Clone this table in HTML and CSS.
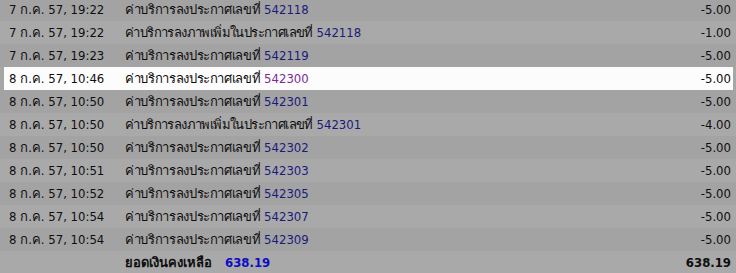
FILE: index.html
```html
<!DOCTYPE html>
<html lang="th">
<head>
<meta charset="utf-8">
<link rel="stylesheet" href="styles.css">
</head>
<body>
<div class="list">
  <div class="row odd"><div class="cells"><span class="date">7 ก.ค. 57, 19:22</span><span class="desc"><span class="th">ค่าบริการลงประกาศเลขที่</span> <a class="lnk">542118</a></span><span class="amt">-5.00</span></div></div>
  <div class="row even"><div class="cells"><span class="date">7 ก.ค. 57, 19:22</span><span class="desc"><span class="th long">ค่าบริการลงภาพเพิ่มในประกาศเลขที่</span> <a class="lnk">542118</a></span><span class="amt">-1.00</span></div></div>
  <div class="row odd"><div class="cells"><span class="date">7 ก.ค. 57, 19:23</span><span class="desc"><span class="th">ค่าบริการลงประกาศเลขที่</span> <a class="lnk">542119</a></span><span class="amt">-5.00</span></div></div>
  <div class="row hl"><div class="cells"><span class="date">8 ก.ค. 57, 10:46</span><span class="desc"><span class="th">ค่าบริการลงประกาศเลขที่</span> <a class="lnk visited">542300</a></span><span class="amt">-5.00</span></div></div>
  <div class="row odd"><div class="cells"><span class="date">8 ก.ค. 57, 10:50</span><span class="desc"><span class="th">ค่าบริการลงประกาศเลขที่</span> <a class="lnk">542301</a></span><span class="amt">-5.00</span></div></div>
  <div class="row even"><div class="cells"><span class="date">8 ก.ค. 57, 10:50</span><span class="desc"><span class="th long">ค่าบริการลงภาพเพิ่มในประกาศเลขที่</span> <a class="lnk">542301</a></span><span class="amt">-4.00</span></div></div>
  <div class="row odd"><div class="cells"><span class="date">8 ก.ค. 57, 10:50</span><span class="desc"><span class="th">ค่าบริการลงประกาศเลขที่</span> <a class="lnk">542302</a></span><span class="amt">-5.00</span></div></div>
  <div class="row even"><div class="cells"><span class="date">8 ก.ค. 57, 10:51</span><span class="desc"><span class="th">ค่าบริการลงประกาศเลขที่</span> <a class="lnk">542303</a></span><span class="amt">-5.00</span></div></div>
  <div class="row odd"><div class="cells"><span class="date">8 ก.ค. 57, 10:52</span><span class="desc"><span class="th">ค่าบริการลงประกาศเลขที่</span> <a class="lnk">542305</a></span><span class="amt">-5.00</span></div></div>
  <div class="row even"><div class="cells"><span class="date">8 ก.ค. 57, 10:54</span><span class="desc"><span class="th">ค่าบริการลงประกาศเลขที่</span> <a class="lnk">542307</a></span><span class="amt">-5.00</span></div></div>
  <div class="row odd"><div class="cells"><span class="date">8 ก.ค. 57, 10:54</span><span class="desc"><span class="th">ค่าบริการลงประกาศเลขที่</span> <a class="lnk">542309</a></span><span class="amt">-5.00</span></div></div>
  <div class="row even total"><div class="cells"><span class="date"></span><span class="desc"><span class="tot">ยอดเงินคงเหลือ</span> <span class="sum">638.19</span></span><span class="amt">638.19</span></div></div>
</div>
</body>
</html>
```

FILE: styles.css
```css
html, body {
  margin: 0;
  padding: 0;
  background: #a6a6a6;
  overflow: hidden;
}
body {
  font-family: "DejaVu Sans Condensed", "DejaVu Sans", "Noto Sans", sans-serif;
  font-size: 13px;
  color: #0e0e0e;
}
.list {
  margin-top: -2px;
  display: flex;
  flex-direction: column;
}
.row {
  height: 23px;
  padding: 0 3px 0 4px;
}
.row.odd { background: #a3a3a3; }
.row.even { background: #a9a9a9; }
.row.hl { background: #a6a6a6; }
.row.hl .cells { background: #fcfcfc; }
.cells {
  height: 100%;
  display: grid;
  grid-template-columns: 121px 1fr auto;
  align-items: center;
}
.date { padding-left: 5px; white-space: nowrap; }
.desc { white-space: nowrap; }
.th { letter-spacing: -0.35px; }
.th.long { letter-spacing: -0.6px; }
.amt { padding-right: 2px; text-align: right; }
.lnk { color: #1a1a7c; text-decoration: none; }
.lnk.visited { color: #7b2a96; }
.total .desc, .total .amt { font-weight: bold; }
.sum { color: #0c0cc4; margin-left: 9px; }
```
